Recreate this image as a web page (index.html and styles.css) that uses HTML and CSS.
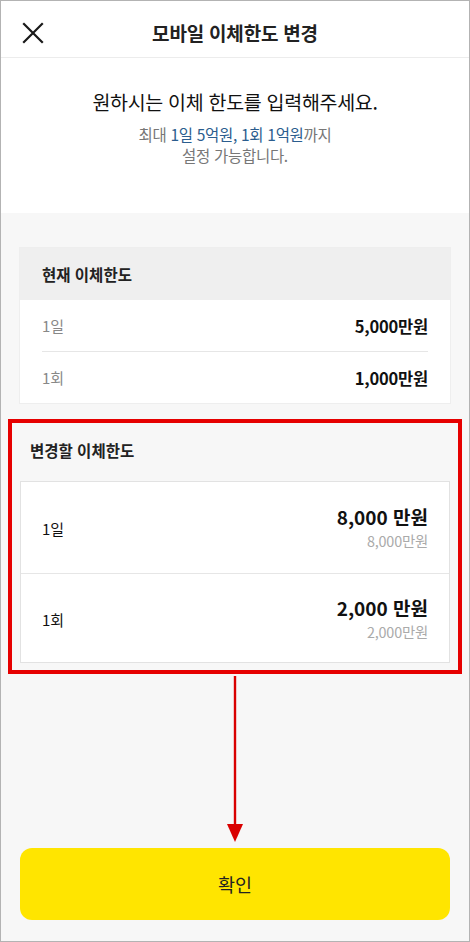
FILE: index.html
```html
<!DOCTYPE html>
<html lang="ko">
<head>
<meta charset="utf-8">
<title>모바일 이체한도 변경</title>
<link rel="stylesheet" href="styles.css">
</head>
<body>
<div class="frame">
  <header class="header">
    <button class="close" aria-label="닫기">
      <svg width="22" height="22" viewBox="0 0 22 22"><path d="M2 2L20 20M20 2L2 20" stroke="#1a1a1a" stroke-width="2.2" stroke-linecap="square" fill="none"/></svg>
    </button>
    <h1 class="title">모바일 이체한도 변경</h1>
  </header>
  <section class="intro">
    <p class="intro-main">원하시는 이체 한도를 입력해주세요.</p>
    <p class="intro-sub">최대 <span class="hl">1일 5억원, 1회 1억원</span>까지<br>설정 가능합니다.</p>
  </section>
  <main class="content">
    <div class="card current">
      <div class="card-head">현재 이체한도</div>
      <div class="rows">
        <div class="row"><span class="label">1일</span><span class="value">5,000만원</span></div>
        <div class="row"><span class="label">1회</span><span class="value">1,000만원</span></div>
      </div>
    </div>
    <div class="change">
      <div class="change-title">변경할 이체한도</div>
      <div class="card newcard">
        <div class="nrow"><span class="nlabel">1일</span><div class="nval"><span class="big">8,000 만원</span><span class="small">8,000만원</span></div></div>
        <div class="nrow"><span class="nlabel">1회</span><div class="nval"><span class="big">2,000 만원</span><span class="small">2,000만원</span></div></div>
      </div>
    </div>
    <svg class="arrow" width="20" height="168" viewBox="0 0 20 168"><path d="M10 0V150" stroke="#d90000" stroke-width="2.4"/><path d="M2 148L10 166L18 148Z" fill="#d90000"/></svg>
    <button class="confirm">확인</button>
  </main>
</div>
</body>
</html>
```
FILE: styles.css
```css
* { box-sizing: border-box; margin: 0; padding: 0; }
body { margin: 0; font-family: "Noto Sans CJK KR", "Noto Sans", sans-serif; color: #111; }
.frame { width: 470px; height: 942px; border: 1px solid #b3b3b3; display: flex; flex-direction: column; background: #f7f7f7; }
.header { height: 57px; background: #fff; border-bottom: 1px solid #ececec; position: relative; display: flex; align-items: center; justify-content: center; flex: none; }
.close { position: absolute; left: 21px; top: 21px; background: none; border: 0; width: 22px; height: 22px; display: block; }
.close svg { display: block; }
.title { font-size: 19px; font-weight: 700; color: #222; letter-spacing: -0.2px; margin-top: 6px; }
.intro { background: #fff; height: 155px; text-align: center; padding-top: 31px; flex: none; }
.intro-main { font-size: 19.5px; line-height: 26px; color: #111; letter-spacing: -0.3px; }
.intro-sub { font-size: 15.5px; line-height: 21px; color: #777; margin-top: 9px; letter-spacing: -0.3px; }
.hl { color: #2b5d8e; }
.content { flex: 1; position: relative; padding: 35px 19px 21px; display: flex; flex-direction: column; }
.card { background: #fff; }
.current { box-shadow: 0 0 0 1px #eeeeee; }
.card-head { height: 52px; background: #efefef; display: flex; align-items: center; padding: 0 22px; font-size: 15.5px; font-weight: 700; color: #222; }
.rows { padding: 0 22px; }
.row { height: 51px; display: flex; align-items: center; justify-content: space-between; }
.row + .row { border-top: 1px solid #e6e6e6; height: 52px; }
.label { font-size: 15px; color: #888; }
.value { font-size: 16.5px; font-weight: 700; color: #111; letter-spacing: -0.2px; }
.change { margin: 16px -12px 0; border: 4px solid #e60000; padding: 16px 8px 7px; }
.change-title { font-size: 15.5px; font-weight: 700; color: #222; line-height: 22px; padding-left: 10px; margin-bottom: 20px; }
.newcard { border: 1px solid #e2e2e2; }
.nrow { height: 91px; display: flex; align-items: center; justify-content: space-between; padding: 0 21px; }
.nrow + .nrow { border-top: 1px solid #e6e6e6; height: 89px; }
.nlabel { font-size: 15px; color: #111; padding-top: 2px; }
.nval { display: flex; flex-direction: column; align-items: flex-end; }
.big { font-size: 19px; font-weight: 700; line-height: 24px; color: #111; }
.small { font-size: 14.4px; line-height: 18px; color: #aaa; margin-top: 3px; letter-spacing: -0.2px; }
.arrow { position: absolute; left: 224px; top: 463px; }
.confirm { margin-top: auto; height: 72px; width: 100%; border: 0; border-radius: 12px; background: #ffe500; font-family: "Noto Sans CJK KR", sans-serif; font-size: 18.5px; color: #222; }
```
